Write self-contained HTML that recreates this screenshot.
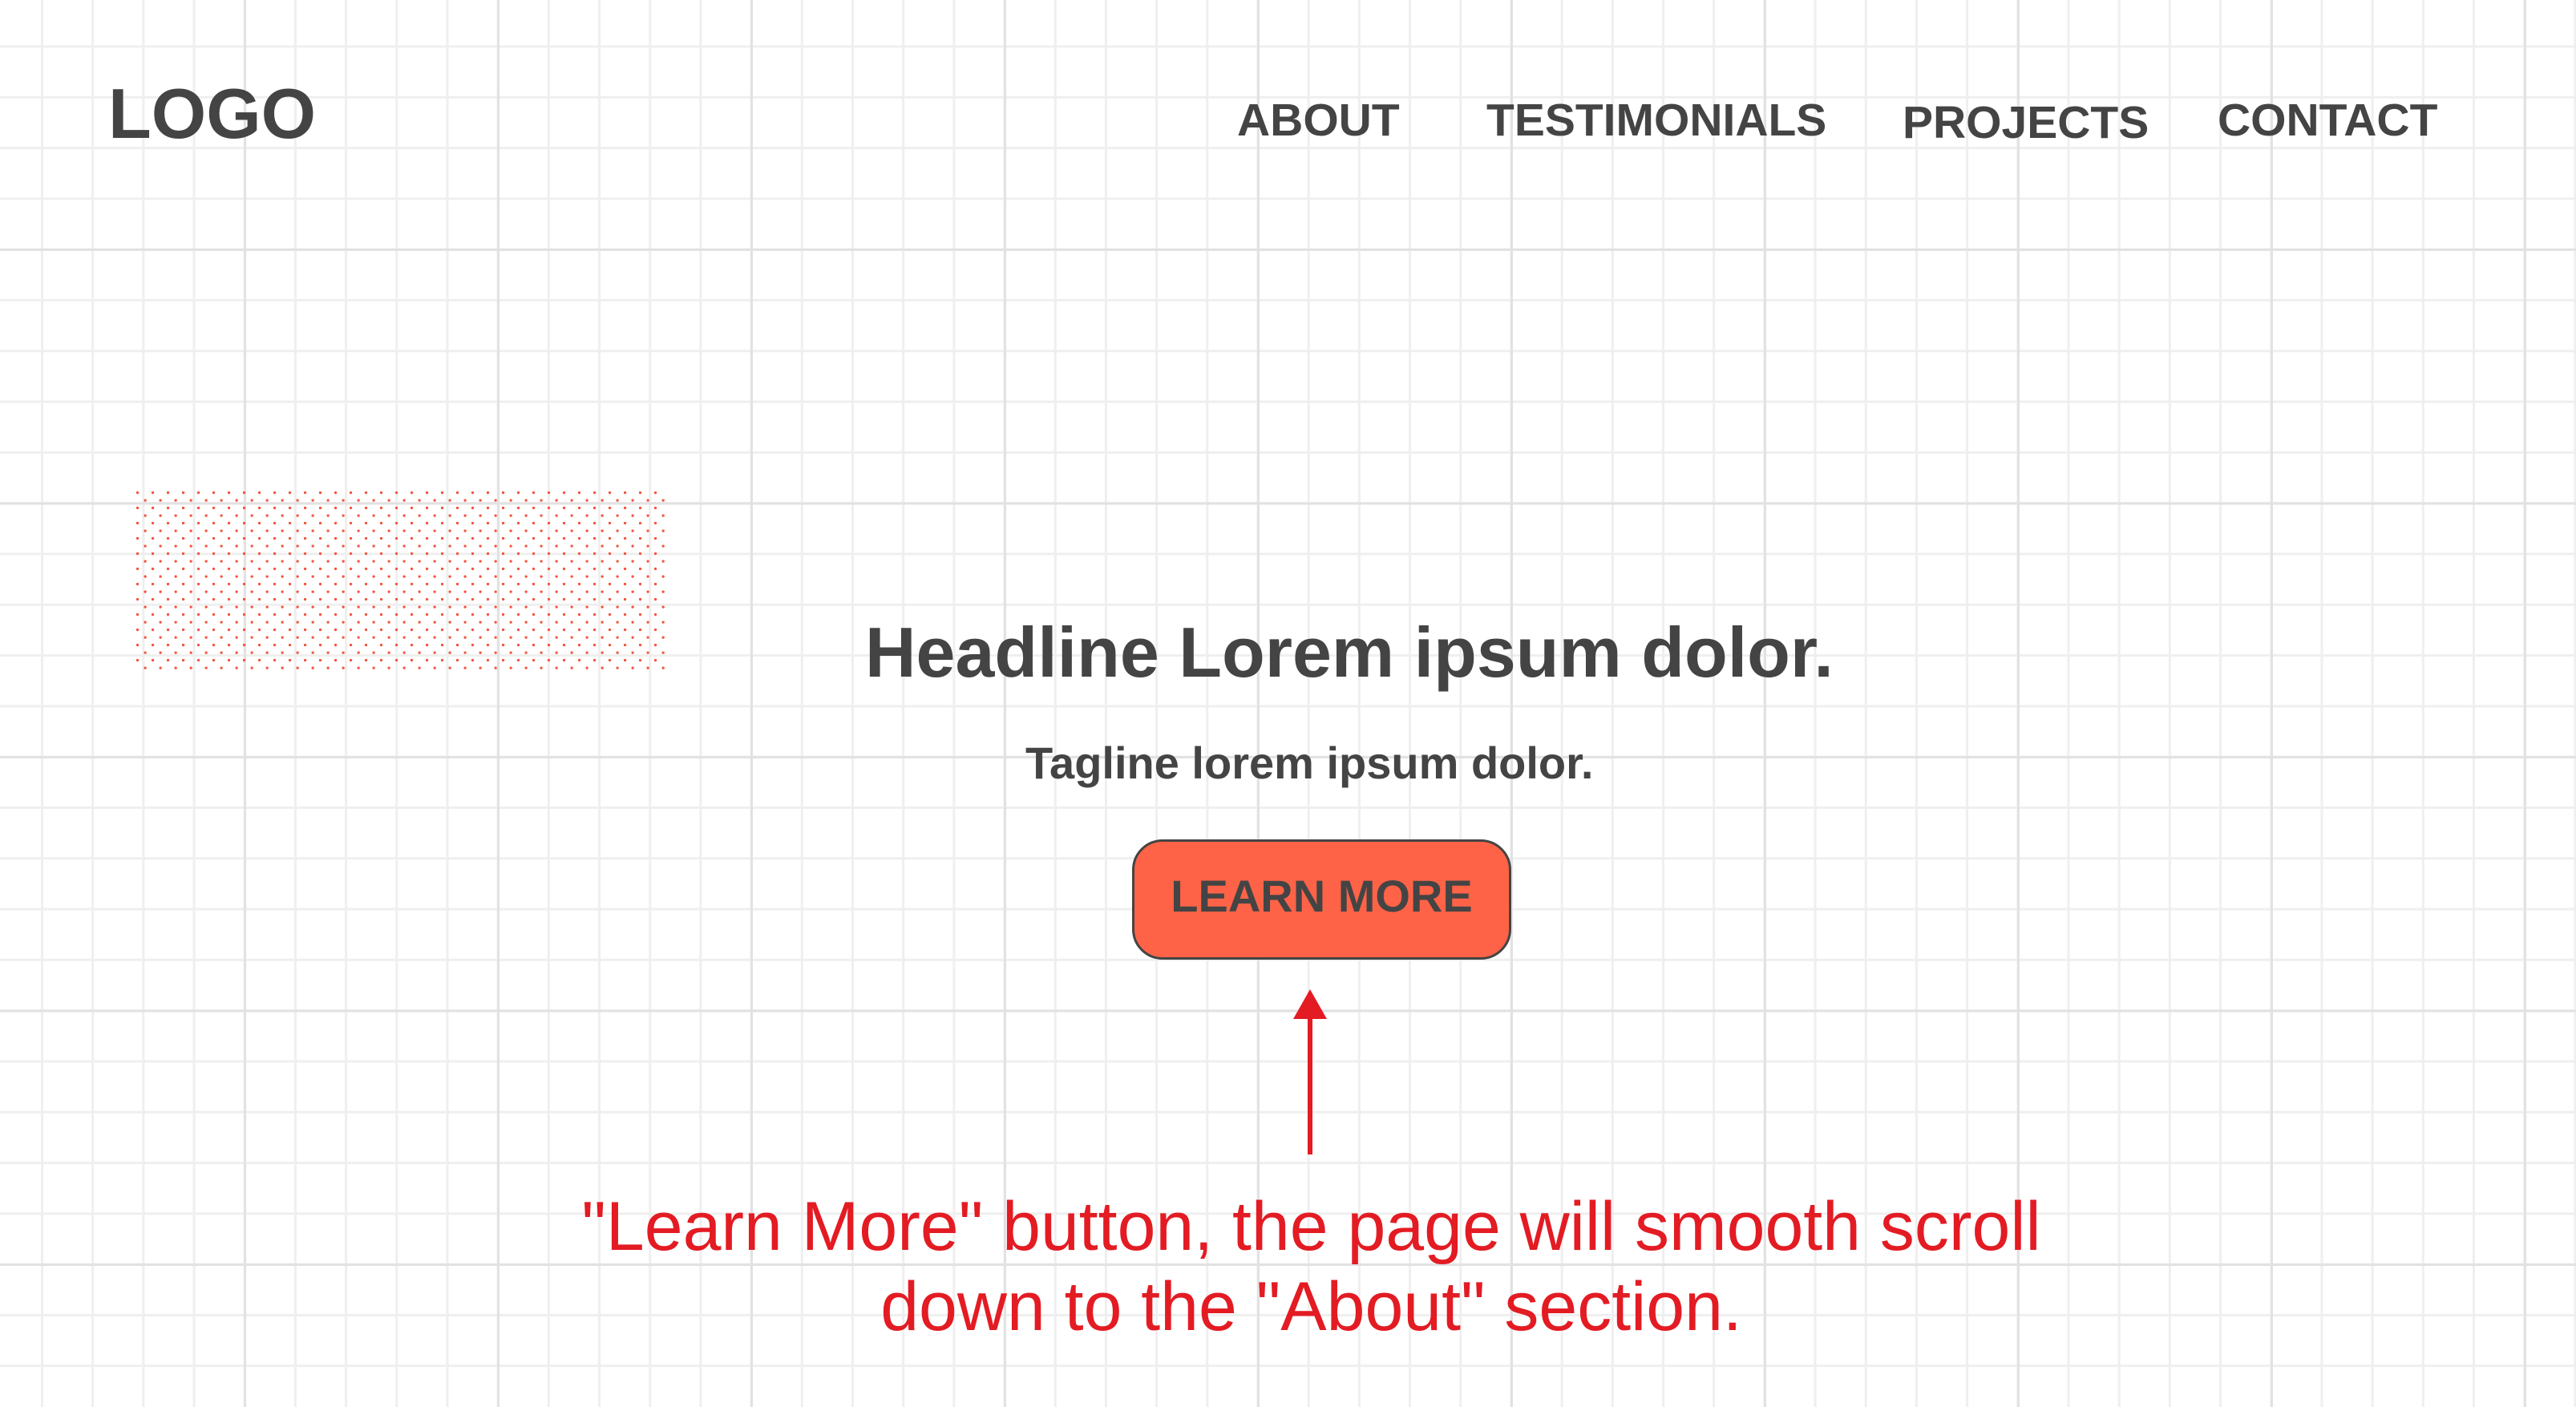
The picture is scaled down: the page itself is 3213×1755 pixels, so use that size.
<!DOCTYPE html>
<html><head><meta charset="utf-8"><style>
html,body{margin:0;padding:0}
body{width:3213px;height:1755px;position:relative;overflow:hidden;background-color:#fff;
font-family:"Liberation Sans",Arial,sans-serif;color:#444;
background-image:
linear-gradient(to right,#e2e2e2 0,#e2e2e2 3px,transparent 3px),
linear-gradient(to bottom,#e2e2e2 0,#e2e2e2 3px,transparent 3px),
linear-gradient(to right,#efefef 0,#efefef 3px,transparent 3px),
linear-gradient(to bottom,#efefef 0,#efefef 3px,transparent 3px);
background-size:316px 100%,100% 316.5px,63.2px 100%,100% 63.3px;
background-position:304px 0,0 310px,51px 0,0 56.5px;}
.t{position:absolute;white-space:nowrap;font-weight:bold;line-height:1}
.dots2{position:absolute;left:170px;top:613px;width:661px;height:223px;
background:radial-gradient(circle at 1.5px 1.5px,#f5533d 0,#f5533d 1.6px,transparent 1.9px) 0 0/19px 19px,
radial-gradient(circle at 1.5px 1.5px,#f5533d 0,#f5533d 1.6px,transparent 1.9px) 9.6px 9.6px/19px 19px;}
.btn{position:absolute;left:1412px;top:1047px;width:467px;height:144px;background:#ff6347;border:3px solid #444;border-radius:38px;}
.ann{position:absolute;left:29px;width:3213px;text-align:center;color:#e31b23;font-size:86px;line-height:100px;white-space:nowrap}
</style></head><body>
<div class="t" style="left:135px;top:98px;font-size:88px">LOGO</div>
<div class="t" style="left:1543px;top:122px;font-size:57px">ABOUT</div>
<div class="t" style="left:1854px;top:122px;font-size:57px">TESTIMONIALS</div>
<div class="t" style="left:2373px;top:125px;font-size:57px">PROJECTS</div>
<div class="t" style="left:2766px;top:122px;font-size:57px">CONTACT</div>
<div class="dots2"></div>
<div class="t" style="left:1079px;top:770px;font-size:88px">Headline Lorem ipsum dolor.</div>
<div class="t" style="left:1279px;top:924px;font-size:56px">Tagline lorem ipsum dolor.</div>
<div class="btn"></div>
<div class="t" style="left:1412px;top:1090px;width:473px;text-align:center;font-size:56px">LEARN MORE</div>
<svg style="position:absolute;left:0;top:0" width="3213" height="1755">
<line x1="1634" y1="1262" x2="1634" y2="1440" stroke="#e31b23" stroke-width="6"/>
<polygon points="1634,1234 1655,1271 1613,1271" fill="#e31b23"/>
</svg>
<div class="ann" style="top:1480px">"Learn More" button, the page will smooth scroll</div>
<div class="ann" style="top:1580px">down to the "About" section.</div>
</body></html>
